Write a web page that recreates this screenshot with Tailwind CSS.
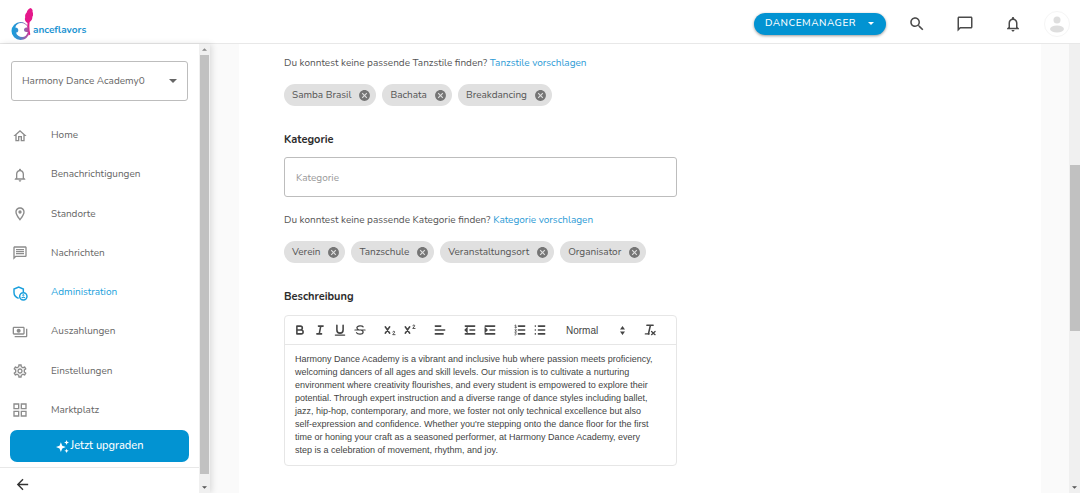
<!DOCTYPE html>
<html lang="de">
<head>
    <meta charset="UTF-8">
    <meta name="viewport" content="width=device-width, initial-scale=1.0">
    <title>Danceflavors - Administration</title>
    <script src="https://cdn.jsdelivr.net/npm/@tailwindcss/browser@4"></script>
    <style>
        body {
            font-family: Nunito, Lato, 'Open Sans', sans-serif;
        }
    </style>
</head>
<body class="h-screen flex flex-col overflow-hidden bg-[#fafafa] text-[10px] text-[#555]">

    <!-- Shared icons -->
    <svg class="hidden">
        <symbol id="bell" viewBox="0 0 24 24"><path d="M12 22c1.1 0 2-.9 2-2h-4c0 1.1.9 2 2 2zm6-6v-5c0-3.07-1.63-5.64-4.5-6.32V4c0-.83-.67-1.5-1.5-1.5s-1.5.67-1.5 1.5v.68C7.64 5.36 6 7.92 6 11v5l-2 2v1h16v-1l-2-2zm-2 1H8v-6c0-2.48 1.51-4.5 4-4.5s4 2.02 4 4.5v6z"/></symbol>
        <symbol id="cancel" viewBox="0 0 24 24"><path d="M12 2C6.47 2 2 6.47 2 12s4.47 10 10 10 10-4.47 10-10S17.53 2 12 2zm5 13.59L15.59 17 12 13.41 8.41 17 7 15.59 10.59 12 7 8.41 8.41 7 12 10.59 15.59 7 17 8.41 13.41 12 17 15.59z"/></symbol>
        <symbol id="caret" viewBox="0 0 10 5"><path d="M0 0h10L5 5z"/></symbol>
    </svg>

    <!-- Header -->
    <header class="h-11 shrink-0 flex items-center justify-between border-b border-[#e8e8e8] bg-white pt-1 pl-[11px] pr-[10px]">
        <a href="#" class="flex items-end text-[#1c94d2]" aria-label="Danceflavors">
            <svg class="w-[22px] h-8" viewBox="0 0 22 32">
                <defs>
                    <linearGradient id="ring" gradientUnits="userSpaceOnUse" x1="0" x2="20" y1="0" y2="0"><stop offset="0" stop-color="#119fdf"/><stop offset=".4" stop-color="#3c8fce"/><stop offset=".75" stop-color="#a55aa8"/><stop offset="1" stop-color="#d0308f"/></linearGradient>
                </defs>
                <path fill="#e5188b" d="M19.500 0c1.700.8 2.500 2 2 3.800 1 2 .8 3.600-.2 5 .3 2.200-.8 4-2.600 5.200-.6 3.500-.4 8 .6 12.500l-1.700.9c-1.100-4-1.500-8.500-1.100-12.500-2.200-1.200-3.200-3.200-2.300-5.700-.4-2.200.4-3.700 1.500-4.700C16.200 2.400 17.500.7 19.500 0z"/>
                <path fill="url(#ring)" fill-rule="evenodd" d="M9.500 14a9 9 0 1 0 0 18c4.500 0 7.500-2.800 8.500-6.500l-.5-6.500c-1.500-3-4.500-5-8-5zm.5 1c3.200 0 5.600 1.500 6.800 4.500h-1.500c-1.300 0-2.300 1-2.300 2.300s1 2.300 2.300 2.300h1.500c-.8 3-2.800 5-5.600 5-3 0-5.400-1.700-6.200-4.500 1.500 0 2.300-1 2.300-2.400 0-1.700-1.200-2.700-3-2.700C5.100 16.600 7.200 15 10 15z"/>
            </svg>
            <span class="text-[10px] leading-[12px] font-bold pb-1">anceflavors</span>
        </a>
        <div class="flex items-center text-[#4a4a4a] fill-current">
            <button class="flex items-center gap-3 h-[22px] rounded-full bg-[#0293d2] pl-[11px] pr-3 text-[10px] font-medium tracking-wider text-white shadow-[0_1px_3px_rgba(0,0,0,0.4)]">
                DANCEMANAGER
                <svg class="w-[6px] h-[3px] fill-current"><use href="#caret"/></svg>
            </button>
            <button class="ml-[22px]" aria-label="Suche">
                <svg class="size-[18px]" viewBox="0 0 24 24"><path d="M15.500 14h-.79l-.28-.27C15.410 12.590 16 11.110 16 9.500 16 5.910 13.090 3 9.500 3S3 5.910 3 9.500 5.910 16 9.500 16c1.610 0 3.090-.59 4.230-1.570l.27.28v.79l5 4.990L20.490 19l-4.990-5zm-6 0C7.010 14 5 11.990 5 9.500S7.010 5 9.500 5 14 7.010 14 9.500 11.990 14 9.500 14z"/></svg>
            </button>
            <button class="ml-[30px]" aria-label="Nachrichten">
                <svg class="size-[18px]" viewBox="0 0 24 24"><path d="M20 2H4c-1.100 0-2 .9-2 2v18l4-4h14c1.100 0 2-.9 2-2V4c0-1.100-.9-2-2-2zm0 14H5.200L4 17.200V4h16v12z"/></svg>
            </button>
            <button class="ml-[30px]" aria-label="Benachrichtigungen">
                <svg class="size-[18px]"><use href="#bell"/></svg>
            </button>
            <button class="ml-[22px] flex size-[26px] items-center justify-center rounded-full border border-[#f5f5f5] text-[#dedede]" aria-label="Profil">
                <svg class="w-4 h-[18px] fill-current" viewBox="0 0 16 18"><circle cx="8" cy="5" r="3.500"/><ellipse cx="8" cy="14" rx="7" ry="3.500"/></svg>
            </button>
        </div>
    </header>

    <div class="flex flex-1 min-h-0">
        <!-- Sidebar -->
        <aside class="flex w-[210px] shrink-0 bg-white shadow-[2px_0_6px_rgba(0,0,0,0.12)]">
            <div class="flex flex-1 flex-col">
                <div class="relative mx-[11px] mt-[17px]">
                    <select aria-label="Organisation" class="block h-10 w-full appearance-none rounded-[3px] border border-[#bdbdbd] bg-white px-[10px] text-[10px] text-[#666]">
                        <option>Harmony Dance Academy0</option>
                    </select>
                    <svg class="pointer-events-none absolute right-[11px] top-[18px] h-1 w-2 fill-[#666]"><use href="#caret"/></svg>
                </div>

                <nav class="mt-[15px] flex flex-1 flex-col text-[10px] text-[#666]">
                    <a href="#" class="flex flex-1 items-center gap-[23px] pl-3">
                        <svg class="size-4 fill-[#8c8c8c]" viewBox="0 0 24 24"><path d="M12 5.690l5 4.500V18h-2v-6H9v6H7v-7.810l5-4.500M12 3L2 12h3v8h6v-6h2v6h6v-8h3L12 3z"/></svg>
                        Home
                    </a>
                    <a href="#" class="flex flex-1 items-center gap-[23px] pl-3">
                        <svg class="size-4 fill-[#8c8c8c]"><use href="#bell"/></svg>
                        Benachrichtigungen
                    </a>
                    <a href="#" class="flex flex-1 items-center gap-[23px] pl-3">
                        <svg class="size-4 fill-[#8c8c8c]" viewBox="0 0 24 24"><path d="M12 2C8.130 2 5 5.130 5 9c0 5.250 7 13 7 13s7-7.750 7-13c0-3.870-3.130-7-7-7zM7 9c0-2.760 2.240-5 5-5s5 2.240 5 5c0 2.880-2.880 7.190-5 9.880C9.920 16.210 7 11.850 7 9z"/><circle cx="12" cy="9" r="2.500"/></svg>
                        Standorte
                    </a>
                    <a href="#" class="flex flex-1 items-center gap-[23px] pl-3">
                        <svg class="size-4 fill-[#8c8c8c]" viewBox="0 0 24 24"><path d="M4 4h16v12H5.170L4 17.170V4m0-2c-1.100 0-1.990.9-1.990 2L2 22l4-4h14c1.100 0 2-.9 2-2V4c0-1.100-.9-2-2-2H4zm2 10h12v2H6v-2zm0-3h12v2H6V9zm0-3h12v2H6V6z"/></svg>
                        Nachrichten
                    </a>
                    <a href="#" class="flex flex-1 items-center gap-[23px] pl-3 text-[#1a9fdc]" aria-current="page">
                        <svg class="size-4" viewBox="0 0 24 24" fill="none" stroke="currentColor" stroke-width="2.200"><path d="M10 20C6 18.500 3 15 3 11.200V6L10 3l7 3v4.500"/><circle cx="17" cy="17" r="5.500"/><circle cx="17" cy="15.300" r="1" stroke-width="1.500"/><path d="M14.500 19.300c1-1.200 4-1.200 5 0" stroke-width="1.800"/></svg>
                        Administration
                    </a>
                    <a href="#" class="flex flex-1 items-center gap-[23px] pl-3">
                        <svg class="size-4 fill-[#8c8c8c]" viewBox="0 0 24 24"><path d="M19 14V6c0-1.100-.9-2-2-2H3c-1.100 0-2 .9-2 2v8c0 1.100.9 2 2 2h14c1.100 0 2-.9 2-2zm-2 0H3V6h14v8zm-7-7c-1.660 0-3 1.340-3 3s1.340 3 3 3 3-1.340 3-3-1.340-3-3-3zm13 0v11c0 1.100-.9 2-2 2H4v-2h17V7h2z"/></svg>
                        Auszahlungen
                    </a>
                    <a href="#" class="flex flex-1 items-center gap-[23px] pl-3">
                        <svg class="size-4 fill-[#8c8c8c]" viewBox="0 0 24 24"><path d="M19.430 12.980c.04-.32.07-.64.07-.98 0-.34-.03-.66-.07-.98l2.110-1.650c.19-.15.24-.42.12-.64l-2-3.460c-.09-.16-.26-.25-.44-.25-.06 0-.12.01-.17.03l-2.490 1c-.52-.4-1.080-.73-1.690-.98l-.38-2.650C14.460 2.180 14.250 2 14 2h-4c-.25 0-.46.18-.49.42l-.38 2.650c-.61.25-1.170.59-1.690.98l-2.490-1c-.06-.02-.12-.03-.18-.03-.17 0-.34.09-.43.25l-2 3.460c-.13.22-.07.49.12.64l2.110 1.650c-.04.32-.07.65-.07.98 0 .33.03.66.07.98l-2.110 1.650c-.19.15-.24.42-.12.64l2 3.460c.09.16.26.25.44.25.06 0 .12-.01.17-.03l2.490-1c.52.4 1.080.73 1.690.98l.38 2.650c.03.24.24.42.49.42h4c.25 0 .46-.18.49-.42l.38-2.650c.61-.25 1.170-.59 1.690-.98l2.490 1c.06.02.12.03.18.03.17 0 .34-.09.43-.25l2-3.460c.12-.22.07-.49-.12-.64l-2.110-1.650zm-1.980-1.710c.04.31.05.52.05.73 0 .21-.02.43-.05.73l-.14 1.130.89.7 1.080.84-.7 1.210-1.270-.51-1.040-.42-.9.68c-.43.32-.84.56-1.250.73l-1.060.43-.16 1.130-.2 1.350h-1.400l-.19-1.350-.16-1.130-1.060-.43c-.43-.18-.83-.41-1.230-.71l-.91-.7-1.060.43-1.270.51-.7-1.210 1.080-.84.89-.7-.14-1.130c-.03-.31-.05-.54-.05-.74s.02-.43.05-.73l.14-1.130-.89-.7-1.080-.84.7-1.210 1.270.51 1.040.42.9-.68c.43-.32.84-.56 1.250-.73l1.060-.43.16-1.130.2-1.350h1.390l.19 1.350.16 1.130 1.060.43c.43.18.83.41 1.230.71l.91.7 1.060-.43 1.270-.51.7 1.210-1.070.85-.89.7.14 1.130zM12 8c-2.210 0-4 1.790-4 4s1.790 4 4 4 4-1.790 4-4-1.790-4-4-4zm0 6c-1.100 0-2-.9-2-2s.9-2 2-2 2 .9 2 2-.9 2-2 2z"/></svg>
                        Einstellungen
                    </a>
                    <a href="#" class="flex flex-1 items-center gap-[23px] pl-3">
                        <svg class="size-4 fill-[#8c8c8c]" viewBox="0 0 24 24"><path d="M2 2v9h9V2H2zm7 7H4V4h5v5zm-7 4v9h9v-9H2zm7 7H4v-5h5v5zm4-18v9h9V2h-9zm7 7h-5V4h5v5zm-7 4v9h9v-9h-9zm7 7h-5v-5h5v5z"/></svg>
                        Marktplatz
                    </a>
                </nav>

                <button class="mx-[10px] flex h-8 shrink-0 items-center justify-center gap-[2px] rounded-[7px] bg-[#0293d2] text-[11px] font-medium text-white">
                    <svg class="size-[13px] fill-current" viewBox="0 0 24 24"><path d="M9 4l2.500 6.500L18 13l-6.500 2.500L9 22l-2.500-6.500L0 13l6.500-2.500zM19.500 0l1.300 3.200L24 4.500l-3.200 1.300L19.500 9l-1.300-3.200L15 4.500l3.200-1.300zM19.500 16l1.200 2.800 2.800 1.200-2.800 1.200-1.200 2.800-1.200-2.800-2.800-1.200 2.800-1.200z"/></svg>
                    Jetzt upgraden
                </button>
                <div class="mt-[5px] flex h-[26px] shrink-0 items-end border-t border-[#e8e8e8] pl-[14px]">
                    <button aria-label="Menü einklappen">
                        <svg class="size-[17px] fill-[#333]" viewBox="0 0 24 24"><path d="M20 11H7.830l5.590-5.590L12 4l-8 8 8 8 1.410-1.410L7.830 13H20v-2z"/></svg>
                    </button>
                </div>
            </div>
            <!-- Sidebar scrollbar -->
            <div class="flex w-[11px] flex-col items-center justify-between bg-[#f0f0f0]">
                <svg class="my-1 h-[3px] w-[5px] rotate-180 fill-[#888]"><use href="#caret"/></svg>
                <div class="w-[9px] flex-1 bg-[#c1c1c1]"></div>
                <svg class="mt-3 mb-1 h-[3px] w-[5px] fill-[#555]"><use href="#caret"/></svg>
            </div>
        </aside>

        <!-- Form -->
        <main class="ml-[29px] mr-7 min-w-0 flex-1 overflow-hidden bg-white px-[45px] pt-[11px]">
            <div class="w-[393px]">
                <p class="h-4 leading-4">Du konntest keine passende Tanzstile finden? <a href="#" class="text-[#2d9bd6]">Tanzstile vorschlagen</a></p>
                <ul class="mt-[13px] flex gap-[6px]">
                    <li class="flex h-[22px] items-center gap-[7px] rounded-full bg-[#e0e0e0] pl-2 pr-[5px]">Samba Brasil <button aria-label="Samba Brasil entfernen"><svg class="size-[13px] fill-[#757575]"><use href="#cancel"/></svg></button></li>
                    <li class="flex h-[22px] items-center gap-[7px] rounded-full bg-[#e0e0e0] pl-2 pr-[5px]">Bachata <button aria-label="Bachata entfernen"><svg class="size-[13px] fill-[#757575]"><use href="#cancel"/></svg></button></li>
                    <li class="flex h-[22px] items-center gap-[7px] rounded-full bg-[#e0e0e0] pl-2 pr-[5px]">Breakdancing <button aria-label="Breakdancing entfernen"><svg class="size-[13px] fill-[#757575]"><use href="#cancel"/></svg></button></li>
                </ul>

                <label for="kategorie" class="mt-[26px] block text-[11px] leading-4 font-bold text-[#2b2b2b]">Kategorie</label>
                <input id="kategorie" type="text" placeholder="Kategorie" class="mt-[9px] block h-10 w-full rounded-[3px] border border-[#bdbdbd] px-[11px] pt-[2px] text-[10px] placeholder:text-[#999]">
                <p class="mt-[15px] h-4 leading-4">Du konntest keine passende Kategorie finden? <a href="#" class="text-[#2d9bd6]">Kategorie vorschlagen</a></p>
                <ul class="mt-[13px] flex gap-[6px]">
                    <li class="flex h-[22px] items-center gap-[7px] rounded-full bg-[#e0e0e0] pl-2 pr-[5px]">Verein <button aria-label="Verein entfernen"><svg class="size-[13px] fill-[#757575]"><use href="#cancel"/></svg></button></li>
                    <li class="flex h-[22px] items-center gap-[7px] rounded-full bg-[#e0e0e0] pl-2 pr-[5px]">Tanzschule <button aria-label="Tanzschule entfernen"><svg class="size-[13px] fill-[#757575]"><use href="#cancel"/></svg></button></li>
                    <li class="flex h-[22px] items-center gap-[7px] rounded-full bg-[#e0e0e0] pl-2 pr-[5px]">Veranstaltungsort <button aria-label="Veranstaltungsort entfernen"><svg class="size-[13px] fill-[#757575]"><use href="#cancel"/></svg></button></li>
                    <li class="flex h-[22px] items-center gap-[7px] rounded-full bg-[#e0e0e0] pl-2 pr-[5px]">Organisator <button aria-label="Organisator entfernen"><svg class="size-[13px] fill-[#757575]"><use href="#cancel"/></svg></button></li>
                </ul>

                <h2 id="beschreibung" class="mt-[26px] text-[11px] leading-4 font-bold text-[#2b2b2b]">Beschreibung</h2>
                <div class="mt-[10px] rounded-[4px] border border-[#e6e6e6] font-['Liberation_Sans',Arial,sans-serif]">
                    <!-- Toolbar -->
                    <div class="flex h-[29px] items-center border-b border-[#e6e6e6] px-2 text-[#444]">
                        <div class="flex gap-[6px]">
                            <button aria-label="Fett"><svg class="size-[14px]" viewBox="0 0 18 18" fill="none" stroke="currentColor" stroke-width="2" stroke-linejoin="round"><path d="M5 4h4.500a2.500 2.500 0 0 1 0 5H5zM5 9h5.500a2.500 2.500 0 0 1 0 5H5z"/></svg></button>
                            <button aria-label="Kursiv"><svg class="size-[14px]" viewBox="0 0 18 18" fill="none" stroke="currentColor" stroke-width="2" stroke-linecap="round"><path d="M7 4h6M5 14h6M8 14l2-10"/></svg></button>
                            <button aria-label="Unterstrichen"><svg class="size-[14px]" viewBox="0 0 18 18" fill="none" stroke="currentColor" stroke-width="2" stroke-linecap="round"><path d="M5 3v6a4 4 0 0 0 8 0V3"/><path d="M3 15.500h12" stroke-width="1.500"/></svg></button>
                            <button aria-label="Durchgestrichen"><svg class="size-[14px]" viewBox="0 0 18 18" fill="none" stroke="currentColor" stroke-width="1.600" stroke-linecap="round"><path d="M13 5c-1-2-7.500-2-8 1 0 1.500 1 2.300 3 3M10 9c2.300.8 3.300 1.800 3 3.200-.6 3-7.200 2.700-8.500.3M2.500 9h13"/></svg></button>
                        </div>
                        <div class="ml-4 flex gap-[6px]">
                            <button aria-label="Tiefgestellt"><svg class="size-[14px]" viewBox="0 0 18 18" fill="none" stroke="currentColor" stroke-linecap="round"><path d="M3 5l5.500 8M8.500 5L3 13" stroke-width="2.200"/><path d="M12.500 11.500c.3-1.300 2.800-1.200 2.500.2-.2 1-1.800 1.800-2.500 3.300H15.500" stroke-width="1.200"/></svg></button>
                            <button aria-label="Hochgestellt"><svg class="size-[14px]" viewBox="0 0 18 18" fill="none" stroke="currentColor" stroke-linecap="round"><path d="M3 5l5.500 8M8.500 5L3 13" stroke-width="2.200"/><path d="M12.500 3.500c.3-1.300 2.800-1.200 2.500.2-.2 1-1.800 1.800-2.500 3.300H15.500" stroke-width="1.200"/></svg></button>
                        </div>
                        <button class="ml-4" aria-label="Ausrichtung"><svg class="size-[14px]" viewBox="0 0 18 18" fill="none" stroke="currentColor" stroke-width="2" stroke-linecap="round"><path d="M3 4h7M3 9h12M3 14h10"/></svg></button>
                        <div class="ml-4 flex gap-[6px]">
                            <button aria-label="Einzug verkleinern"><svg class="size-[14px]" viewBox="0 0 18 18" fill="none" stroke="currentColor" stroke-width="2" stroke-linecap="round"><path d="M3 4h12M3 14h12M9 9h6M5 7v4L3 9z"/></svg></button>
                            <button aria-label="Einzug vergrößern"><svg class="size-[14px]" viewBox="0 0 18 18" fill="none" stroke="currentColor" stroke-width="2" stroke-linecap="round"><path d="M3 4h12M3 14h12M9 9h6M3 7v4l2-2z"/></svg></button>
                        </div>
                        <div class="ml-4 flex gap-[6px]">
                            <button aria-label="Nummerierte Liste"><svg class="size-[14px]" viewBox="0 0 18 18" fill="none" stroke="currentColor" stroke-width="2" stroke-linecap="round"><path d="M7 4h8M7 9h8M7 14h8"/><path d="M2.500 3l1-.5v3M2.500 5.500h2M2.500 8c1-1 2 0 1.500.8l-1.500 1.700h2M2.500 12.500h1.700l-.8 1.200c1.400.3 1 1.900-.9 1.700" stroke-width="1"/></svg></button>
                            <button aria-label="Aufzählung"><svg class="size-[14px]" viewBox="0 0 18 18" fill="none" stroke="currentColor" stroke-width="2" stroke-linecap="round"><path d="M7 4h8M7 9h8M7 14h8M3 4h0M3 9h0M3 14h0"/></svg></button>
                        </div>
                        <div class="relative ml-[13px] w-[68px]">
                            <select aria-label="Textformat" class="block h-4 w-full appearance-none bg-transparent px-[6px] text-[10px]">
                                <option>Normal</option>
                            </select>
                            <svg class="pointer-events-none absolute right-[3px] top-1 h-[9px] w-[5px] fill-[#444]" viewBox="0 0 5 9"><path d="M0 3.500h5L2.500 0zM0 5.500h5L2.500 9z"/></svg>
                        </div>
                        <button class="ml-[15px]" aria-label="Formatierung entfernen"><svg class="size-[14px]" viewBox="0 0 18 18" fill="none" stroke="currentColor" stroke-width="2" stroke-linecap="round"><path d="M5 3h8M7 14L9.500 3"/><path d="M3 14h5M11 11l4.500 4M15.500 11L11 15" stroke-width="1.700"/></svg></button>
                    </div>
                    <div contenteditable="true" role="textbox" aria-labelledby="beschreibung" class="min-h-[120px] px-[10px] py-2 text-[9px] leading-[13px] text-[#444] outline-none">
                        Harmony Dance Academy is a vibrant and inclusive hub where passion meets proficiency,<br>
                        welcoming dancers of all ages and skill levels. Our mission is to cultivate a nurturing<br>
                        environment where creativity flourishes, and every student is empowered to explore their<br>
                        potential. Through expert instruction and a diverse range of dance styles including ballet,<br>
                        jazz, hip-hop, contemporary, and more, we foster not only technical excellence but also<br>
                        self-expression and confidence. Whether you're stepping onto the dance floor for the first<br>
                        time or honing your craft as a seasoned performer, at Harmony Dance Academy, every<br>
                        step is a celebration of movement, rhythm, and joy.
                    </div>
                </div>
            </div>
        </main>

        <!-- Page scrollbar -->
        <div class="flex w-[11px] shrink-0 flex-col items-end bg-[#f0f0f0]">
            <div class="h-[27%] shrink-0"></div>
            <div class="h-[37%] w-[10px] shrink-0 bg-[#c1c1c1]"></div>
            <svg class="mt-auto mr-[3px] mb-1 h-[3px] w-[5px] fill-[#555]"><use href="#caret"/></svg>
        </div>
    </div>
</body>
</html>
